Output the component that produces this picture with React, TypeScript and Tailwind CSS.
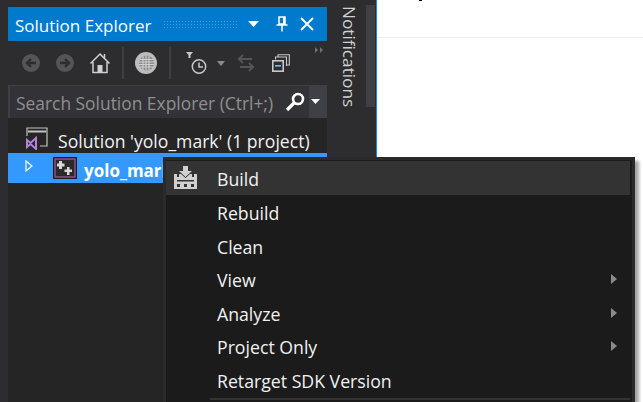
import React from "react";

const font = { fontFamily: '"Open Sans", "Noto Sans", sans-serif' };

function Back({ flip }: { flip?: boolean }) {
  return (
    <svg width="18" height="18" viewBox="0 0 18 18" style={flip ? { transform: "scaleX(-1)" } : undefined}>
      <circle cx="9" cy="9" r="9" fill="#555556" />
      <path d="M14 9H6M9 5L5 9l4 4" fill="none" stroke="#2d2d30" strokeWidth="2.4" />
    </svg>
  );
}

function Home() {
  return (
    <svg width="22" height="22" viewBox="0 0 22 22" fill="none">
      <path d="M1.5 11.5L11 2l9.5 9.5" stroke="#d0d0d0" strokeWidth="1.5" />
      <path d="M15.5 2v4" stroke="#d0d0d0" strokeWidth="1.5" />
      <path d="M4 10v10.5h14V10" stroke="#d0d0d0" strokeWidth="1.5" />
      <rect x="8.5" y="13" width="5" height="7" fill="#d0d0d0" />
    </svg>
  );
}

function Globe() {
  return (
    <svg width="22" height="22" viewBox="0 0 22 22">
      <circle cx="11" cy="11" r="11" fill="#bdbdbd" />
      <circle cx="11.5" cy="11" r="7.5" fill="#8a8a8a" />
      <path d="M5 7.5h13M4 10h15M4 12.5h15M5 15h13M8 4v14M11 3.5v15M14 4v14" stroke="#d8d8d8" strokeWidth="0.9" />
    </svg>
  );
}

function History() {
  return (
    <svg width="22" height="24" viewBox="0 0 22 24" fill="none">
      <path d="M0 0h7L4.5 3v3h-2V3z" fill="#c8c8c8" />
      <circle cx="13" cy="14.5" r="6.7" stroke="#c8c8c8" strokeWidth="1.5" />
      <path d="M13 10.5v4.5h4" stroke="#c8c8c8" strokeWidth="1.5" />
    </svg>
  );
}

function Sync() {
  return (
    <svg width="18" height="18" viewBox="0 0 18 18" fill="none" stroke="#555556" strokeWidth="2">
      <path d="M1 5h14M6 1L2 5l4 4" />
      <path d="M17 13H3M12 9l4 4-4 4" />
    </svg>
  );
}

function Windows() {
  return (
    <svg width="18" height="18" viewBox="0 0 18 18" fill="none">
      <path d="M6 3.5V.7h11.3V11h-2.5M3.5 5.5V3h11v9" stroke="#c8c8c8" strokeWidth="1.1" />
      <rect x="0.8" y="6.8" width="10.4" height="10.4" fill="#2d2d30" stroke="#c8c8c8" strokeWidth="1.6" />
      <rect x="3" y="11" width="6" height="1.6" fill="#75bdf0" />
    </svg>
  );
}

function Search() {
  return (
    <svg width="20" height="20" viewBox="0 0 20 20" fill="none">
      <circle cx="13" cy="7" r="5" stroke="#fff" strokeWidth="2.6" />
      <path d="M9 11l-7 7" stroke="#fff" strokeWidth="3.2" />
    </svg>
  );
}

function SolutionIcon() {
  return (
    <svg width="22" height="23" viewBox="0 0 22 23" fill="none">
      <path d="M1 9V1h20v18H14" stroke="#c4c4c4" strokeWidth="1.2" />
      <path d="M2 4.5h18" stroke="#c4c4c4" strokeWidth="2" />
      <path d="M1 13l3.500 3L10 11v11l-5.500-5L1 20z" stroke="#b180d7" strokeWidth="2" />
    </svg>
  );
}

function ProjectIcon() {
  return (
    <svg width="24" height="22" viewBox="0 0 24 22">
      <rect x="0" y="0" width="24" height="22" fill="#1e1e1e" />
      <rect x="2" y="2" width="20" height="18" fill="#2a2a2a" stroke="#9b4f96" strokeWidth="1.4" />
      <path d="M6 4h3v2.500h2.500v3H9V12H6V9.500H4v-3h2zM14 10h2.500v2.500H19v2.500h-2.500V18H14v-3h-2.500v-2.500H14z" fill="#d8d8d8" />
    </svg>
  );
}

function BuildIcon() {
  return (
    <svg width="23" height="23" viewBox="0 0 23 23">
      <path d="M9 0h5v5h4l-6.500 6L5 5h4z" fill="#d0d0d0" />
      <path d="M0 8h3v3h2V8h2l4.500 4L16 8h2v3h2V8h3v15H0z" fill="#d0d0d0" />
      <rect x="3" y="14" width="17" height="1.500" fill="#333334" />
      <rect x="3" y="18" width="3" height="3" fill="#333334" />
      <rect x="10" y="18" width="3" height="3" fill="#333334" />
      <rect x="17" y="18" width="3" height="3" fill="#333334" />
    </svg>
  );
}

function Sep() {
  return <div className="h-8 w-[2px] bg-[#3f3f41]" />;
}

function MenuItem({ label, arrow, active, icon }: { label: string; arrow?: boolean; active?: boolean; icon?: React.ReactNode }) {
  return (
    <div className={`flex h-[33.6px] shrink-0 items-center ${active ? "bg-[#333334]" : ""}`}>
      <div className="flex w-[51px] shrink-0 items-center pl-[8px]">{icon}</div>
      <span className="grow pt-[5px] text-[17.7px] leading-none text-[#f1f1f1]">{label}</span>
      {arrow && (
        <svg width="6" height="10" viewBox="0 0 6 10" className="mr-[13px] mt-[1px]">
          <path d="M0 0l6 5-6 5z" fill="#8a8a8a" />
        </svg>
      )}
    </div>
  );
}

export default function App() {
  return (
    <div className="relative flex h-[402px] w-[643px] overflow-hidden bg-[#2d2d30]" style={font}>
      {/* Solution Explorer panel */}
      <div className="flex h-full w-[327px] shrink-0 flex-col pl-[8px] pt-[7px]">
        <div className="flex h-[34px] shrink-0 items-center bg-[#007acc] pl-[7px] text-[white]">
          <span className="pt-[2px] text-[17px] leading-none">Solution Explorer</span>
          <div className="ml-[12px] h-[8px] w-[74px] bg-[radial-gradient(#3f9fdd_1px,transparent_1px)] bg-[length:3px_3px]" />
          <svg width="11" height="6" viewBox="0 0 11 6" className="ml-[11px]"><path d="M0 0h11L5.500 6z" fill="#fff" /></svg>
          <svg width="12" height="16" viewBox="0 0 12 16" className="ml-[17px]" fill="none">
            <path d="M3 1h6v7H3zM0.500 9h11M6 9v6.500" stroke="#fff" strokeWidth="1.500" />
            <path d="M7 1h2v7H7z" fill="#fff" />
          </svg>
          <svg width="14" height="14" viewBox="0 0 14 14" className="ml-[12px]" fill="none"><path d="M1 1l12 12M13 1L1 13" stroke="#fff" strokeWidth="1.800" /></svg>
        </div>
        <div className="relative flex h-[44px] shrink-0 items-center pl-[14px]">
          <Back />
          <div className="ml-[16px]"><Back flip /></div>
          <div className="ml-[15px]"><Home /></div>
          <div className="ml-[11px]"><Sep /></div>
          <div className="ml-[11px]"><Globe /></div>
          <div className="ml-[12px]"><Sep /></div>
          <div className="ml-[15px] mt-[1px]"><History /></div>
          <svg width="8" height="5" viewBox="0 0 8 5" className="ml-[9px]"><path d="M0 0h8L4 5z" fill="#8a8a8a" /></svg>
          <div className="ml-[12px]"><Sync /></div>
          <div className="ml-[17px]"><Windows /></div>
          <div className="absolute right-[4px] top-[6px] flex gap-[2px]">
            <svg width="3" height="6" viewBox="0 0 3 6"><path d="M0 0l3 3-3 3z" fill="#707070" /></svg>
            <svg width="3" height="6" viewBox="0 0 3 6"><path d="M0 0l3 3-3 3z" fill="#707070" /></svg>
          </div>
        </div>
        <div className="flex h-[33px] shrink-0 items-center bg-[#3f3f46] pl-[2px]">
          <div className="flex h-[32px] w-[299px] items-center justify-between bg-[#333337] pl-[6px] pr-[4px]">
            <span className="pt-[5px] text-[17.4px] leading-none text-[#8f8f8f]">Search Solution Explorer (Ctrl+;)</span>
            <Search />
          </div>
          <svg width="9" height="5" viewBox="0 0 9 5" className="ml-[2px]"><path d="M0 0h9L4.500 5z" fill="#fff" /></svg>
        </div>
        <div className="flex grow flex-col bg-[#252526] pt-[6px]">
          <div className="flex h-[29px] items-center pl-[18px]">
            <SolutionIcon />
            <span className="ml-[10px] pt-[7px] text-[17.6px] leading-none text-[#f1f1f1]">Solution 'yolo_mark' (1 project)</span>
          </div>
          <div className="flex h-[30px] items-center bg-[#3399ff] pl-[17px]">
            <svg width="8" height="12" viewBox="0 0 8 12" fill="none" className="mb-[5px]"><path d="M1 1l6 5-6 5z" stroke="#fff" strokeWidth="1.200" /></svg>
            <div className="ml-[20px]"><ProjectIcon /></div>
            <span className="ml-[7px] pt-[5px] text-[17px] font-bold leading-none text-white">yolo_mark</span>
          </div>
        </div>
      </div>

      {/* Notifications strip */}
      <div className="flex h-full w-[49px] shrink-0 items-start pl-[12px] pt-[6px]">
        <span className="text-[17.2px] leading-[20px] text-[#d0d0d0] [writing-mode:vertical-lr]">Notifications</span>
        <div className="ml-auto mr-[1px] mt-[-1px] h-[102px] w-[9px] bg-[#3f3f46]" />
      </div>

      {/* Document area */}
      <div className="relative grow border-l-[1px] border-[#0e8ce8] bg-white">
        <div className="absolute left-[42px] top-0 h-[1px] w-[3px] bg-black" />
        <div className="h-[38px] border-b border-[#eeeeee]" />
      </div>

      {/* Context menu */}
      <div className="absolute left-[163px] top-[157px] flex h-[260px] w-[472px] flex-col border-[3px] border-[#2a2a2b] bg-[#1b1b1c] pr-[2px] pt-[1px] shadow-[4px_4px_3px_rgba(0,0,0,0.35)]">
        <MenuItem label="Build" active icon={<BuildIcon />} />
        <MenuItem label="Rebuild" />
        <MenuItem label="Clean" />
        <MenuItem label="View" arrow />
        <MenuItem label="Analyze" arrow />
        <MenuItem label="Project Only" arrow />
        <MenuItem label="Retarget SDK Version" />
        <div className="ml-[44px] mt-[2px] h-[2px] bg-[#333334]" />
      </div>
    </div>
  );
}
